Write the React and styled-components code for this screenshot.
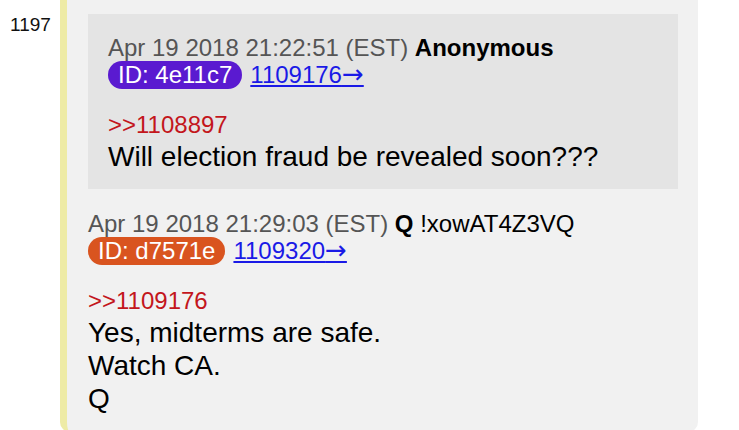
import styled, { createGlobalStyle } from 'styled-components';

const GlobalStyle = createGlobalStyle`
  html, body {
    margin: 0;
    padding: 0;
    background: #ffffff;
    overflow: hidden;
  }
  body {
    font-family: "Liberation Sans", Arial, sans-serif;
    color: #000;
  }
`;

const Page = styled.div`
  display: flex;
  align-items: flex-start;
  width: 739px;
  height: 430px;
  overflow: hidden;
`;

const PostNumber = styled.div`
  width: 50px;
  padding: 15px 0 0 10px;
  font-size: 19px;
  line-height: 20px;
  color: #111;
`;

const Card = styled.div`
  width: 590px;
  margin-top: -10px;
  padding: 24px 20px 17px 21px;
  background: #f1f1f1;
  border-left: 7px solid #eeeba6;
  border-radius: 10px;
`;

const Quote = styled.div`
  background: #e4e4e4;
  padding: 21px 20px 16px 20px;
  margin-bottom: 22px;
`;

const Header = styled.div`
  font-size: 24px;
  line-height: 26px;
  color: #555;
`;

const Author = styled.b`
  color: #000;
`;

const Trip = styled.span`
  color: #000;
`;

const IdBadge = styled.span`
  display: inline-block;
  padding: 1px 10px;
  line-height: 26px;
  border-radius: 14px;
  color: #fff;
  background: ${({ $color }) => $color};
`;

const BackLink = styled.a`
  margin-left: 8px;
  color: #1a1ae6;
  text-decoration: underline;
`;

const Arrow = styled.span`
  font-family: "DejaVu Sans", sans-serif;
  font-size: 26px;
  line-height: 20px;
`;

const ReplyLink = styled.div`
  margin-top: 21px;
  font-size: 24px;
  line-height: 30px;
  color: #c3161c;
`;

const Body = styled.div`
  font-size: 28px;
  line-height: 33px;
  color: #000;
`;

const Post = ({ date, author, trip, id, color, backlink, replyTo, lines }) => (
  <div>
    <Header>
      {date} <Author>{author}</Author>
      {trip && <Trip> {trip}</Trip>}
      <br />
      <IdBadge $color={color}>ID: {id}</IdBadge>
      <BackLink href="#">
        {backlink}
        <Arrow>→</Arrow>
      </BackLink>
    </Header>
    <ReplyLink>&gt;&gt;{replyTo}</ReplyLink>
    <Body>
      {lines.map((line) => (
        <div key={line}>{line}</div>
      ))}
    </Body>
  </div>
);

export default function App() {
  return (
    <>
      <GlobalStyle />
      <Page>
        <PostNumber>1197</PostNumber>
        <Card>
          <Quote>
            <Post
              date="Apr 19 2018 21:22:51 (EST)"
              author="Anonymous"
              id="4e11c7"
              color="#5a1ad0"
              backlink="1109176"
              replyTo="1108897"
              lines={['Will election fraud be revealed soon???']}
            />
          </Quote>
          <Post
            date="Apr 19 2018 21:29:03 (EST)"
            author="Q"
            trip="!xowAT4Z3VQ"
            id="d7571e"
            color="#d9541f"
            backlink="1109320"
            replyTo="1109176"
            lines={['Yes, midterms are safe.', 'Watch CA.', 'Q']}
          />
        </Card>
      </Page>
    </>
  );
}
